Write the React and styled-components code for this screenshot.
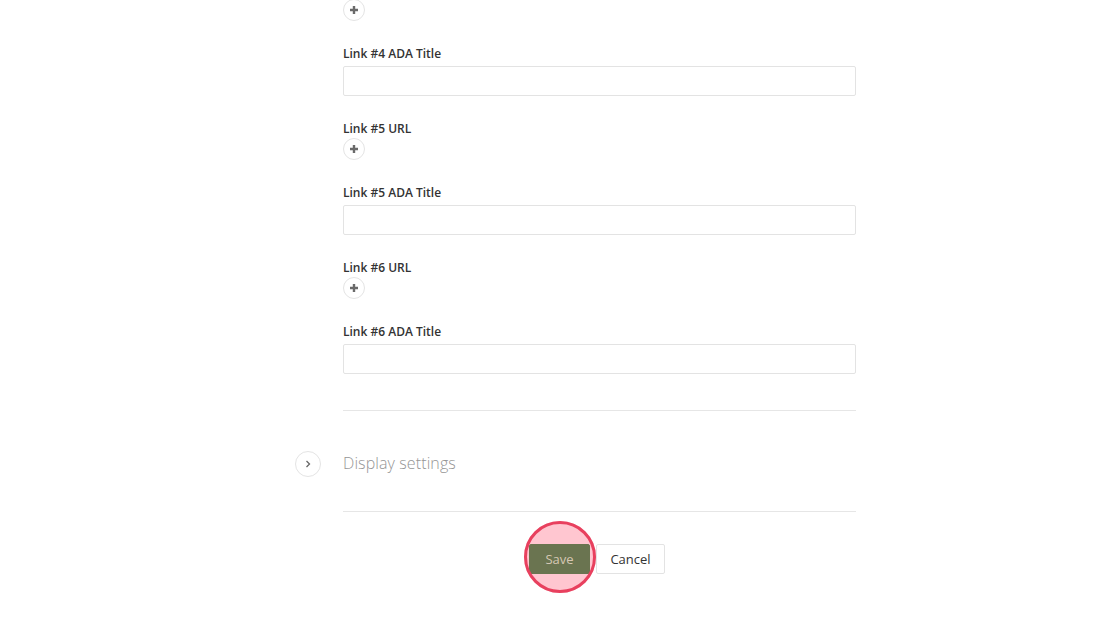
import React from "react";
import styled, { createGlobalStyle } from "styled-components";

const Global = createGlobalStyle`
  html, body { margin: 0; padding: 0; background: #fff; }
  body { font-family: "Open Sans", "Noto Sans", sans-serif; color: #333; }
`;

const Page = styled.div`
  width: 1120px;
  height: 627px;
  overflow: hidden;
  display: flex;
  justify-content: flex-start;
`;

const Column = styled.div`
  width: 513px;
  margin-left: 343px;
  display: flex;
  flex-direction: column;
`;

const Field = styled.div`
  display: flex;
  flex-direction: column;
  align-items: flex-start;
  margin-top: ${(p) => p.$top || 0}px;
`;

const Label = styled.label`
  font-size: 12px;
  font-weight: 600;
  line-height: 18px;
  color: #333;
  padding-top: 1px;
  margin-bottom: ${(p) => p.$gap ?? 3}px;
`;

const TextInput = styled.input`
  box-sizing: border-box;
  height: 30px;
  width: 100%;
  border: 1px solid #e3e3e3;
  border-radius: 2px;
  background: #fff;
  margin: 0;
  padding: 0 8px;
  outline: none;
`;

const PlusButton = styled.button`
  box-sizing: border-box;
  width: 22px;
  height: 22px;
  border-radius: 50%;
  border: 1px solid #e4e4e4;
  background: #fff;
  padding: 0;
  display: flex;
  align-items: center;
  justify-content: center;
  margin-top: ${(p) => p.$top || 0}px;
`;

const Divider = styled.hr`
  border: 0;
  border-top: 1px solid #e6e6e6;
  margin: 0;
  margin-top: ${(p) => p.$top || 0}px;
`;

const Collapsible = styled.div`
  box-sizing: border-box;
  height: 100px;
  padding-top: 4px;
  display: flex;
  align-items: center;
  gap: 22px;
  margin-left: -48px;
`;

const Chevron = styled.button`
  box-sizing: border-box;
  width: 26px;
  height: 26px;
  border-radius: 50%;
  border: 1px solid #e4e4e4;
  background: #fff;
  padding: 0;
  display: flex;
  align-items: center;
  justify-content: center;
  margin-top: 2px;
`;

const SectionTitle = styled.span`
  font-size: 16px;
  font-weight: 300;
  color: #959595;
  line-height: 22px;
  letter-spacing: 0.1px;
`;

const Actions = styled.div`
  display: flex;
  justify-content: center;
  gap: 6px;
  margin-top: 32px;
  padding-right: 5px;
`;

const Button = styled.button`
  position: relative;
  z-index: 1;
  box-sizing: border-box;
  height: 30px;
  padding: 0;
  border-radius: 2px;
  font-family: "Open Sans", "Noto Sans", sans-serif;
  font-size: 13px;
  line-height: 28px;
  border: 1px solid ${(p) => (p.$primary ? "#6a7450" : "#e3e3e3")};
  background: ${(p) => (p.$primary ? "#6a7450" : "#fff")};
  color: ${(p) => (p.$primary ? "#d6c7b4" : "#333")};
  width: ${(p) => p.$w}px;
`;

const Highlight = styled.div`
  position: relative;
`;

const Disc = styled.div`
  position: absolute;
  left: -5px;
  top: -23px;
  width: 72px;
  height: 72px;
  box-sizing: border-box;
  border-radius: 50%;
  z-index: ${(p) => (p.$ring ? 2 : 0)};
  border: ${(p) => (p.$ring ? "3px solid #e8405e" : "none")};
  background: ${(p) => (p.$ring ? "transparent" : "#ffc6d0")};
  pointer-events: none;
`;

const Plus = () => (
  <svg width="10" height="10" viewBox="0 0 10 10">
    <path d="M5 1v8M1 5h8" stroke="#6a6a6a" strokeWidth="2.4" />
  </svg>
);

export default function App() {
  return (
    <Page>
      <Global />
      <Column>
        <PlusButton $top={-1}>
          <Plus />
        </PlusButton>
        <Field $top={23}>
          <Label>Link #4 ADA Title</Label>
          <TextInput />
        </Field>
        <Field $top={23}>
          <Label $gap={0}>Link #5 URL</Label>
          <PlusButton>
            <Plus />
          </PlusButton>
        </Field>
        <Field $top={23}>
          <Label>Link #5 ADA Title</Label>
          <TextInput />
        </Field>
        <Field $top={23}>
          <Label $gap={0}>Link #6 URL</Label>
          <PlusButton>
            <Plus />
          </PlusButton>
        </Field>
        <Field $top={23}>
          <Label>Link #6 ADA Title</Label>
          <TextInput />
        </Field>
        <Divider $top={36} />
        <Collapsible>
          <Chevron>
            <svg width="8" height="10" viewBox="0 0 8 10">
              <path d="M2.5 2l3 3-3 3" stroke="#666" strokeWidth="1.3" fill="none" />
            </svg>
          </Chevron>
          <SectionTitle>Display settings</SectionTitle>
        </Collapsible>
        <Divider />
        <Actions>
          <Highlight>
            <Disc />
            <Button $primary $w={61}>Save</Button>
            <Disc $ring />
          </Highlight>
          <Button $w={69}>Cancel</Button>
        </Actions>
      </Column>
    </Page>
  );
}
